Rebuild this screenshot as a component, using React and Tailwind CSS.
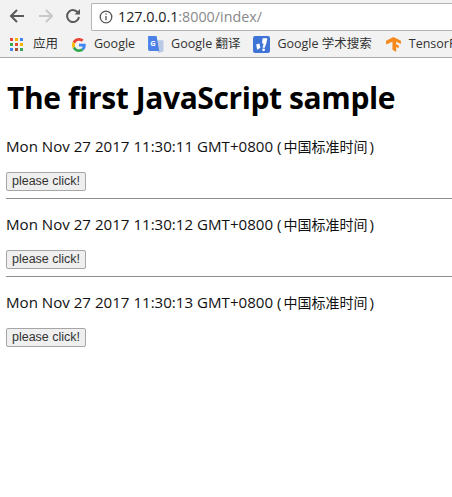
const UI = "font-['Open_Sans','Noto_Sans_CJK_SC',sans-serif]"

function Bookmark({ icon, label, className = '' }) {
  return (
    <div className={`flex items-center gap-[7px] shrink-0 ${className}`}>
      {icon}
      <span className="text-[12.5px] leading-none text-[#333] whitespace-nowrap">{label}</span>
    </div>
  )
}

function AppsIcon() {
  const colors = ['#e5493a', '#f4b400', '#4285f4', '#34a853', '#e5493a', '#f4b400', '#4285f4', '#a0522d', '#34a853']
  return (
    <div className="grid grid-cols-3 gap-[2px] w-[13px] h-[13px]">
      {colors.map((c, i) => (
        <span key={i} className="w-[3px] h-[3px]" style={{ background: c }} />
      ))}
    </div>
  )
}

function GoogleIcon() {
  return (
    <svg viewBox="0 0 48 48" className="w-[14px] h-[14px]">
      <path fill="#EA4335" d="M24 9.500c3.500 0 6.700 1.300 9.100 3.500l6.800-6.800C35.800 2.400 30.300 0 24 0 14.600 0 6.500 5.400 2.600 13.200l7.900 6.100C12.400 13.600 17.700 9.500 24 9.500z" />
      <path fill="#4285F4" d="M47 24.500c0-1.600-.1-3.100-.4-4.500H24v9h12.900c-.6 3-2.200 5.500-4.700 7.200l7.600 5.900C44.300 37.900 47 31.800 47 24.500z" />
      <path fill="#FBBC05" d="M10.500 28.700c-.5-1.400-.8-3-.8-4.700s.3-3.200.8-4.700l-7.900-6.100C.9 16.500 0 20.100 0 24s.9 7.500 2.600 10.800l7.900-6.100z" />
      <path fill="#34A853" d="M24 48c6.500 0 11.900-2.100 15.800-5.800l-7.600-5.900c-2.100 1.400-4.900 2.300-8.200 2.300-6.300 0-11.600-4.100-13.500-9.800l-7.900 6.100C6.500 42.600 14.600 48 24 48z" />
    </svg>
  )
}

function TranslateIcon() {
  return (
    <svg viewBox="0 0 16 16" className="w-[17px] h-[17px]">
      <path fill="#b9c9e6" d="M7 4h7.500a1 1 0 0 1 1 1v9.500L11 16l-1-2z" />
      <path fill="#4c82e8" d="M1 0h8l2.500 14H2.500a1.500 1.500 0 0 1-1.500-1.500z" />
      <text x="3" y="9" fontSize="7" fontWeight="700" fill="#fff" fontFamily="Open Sans, sans-serif">G</text>
    </svg>
  )
}

function ScholarIcon() {
  return (
    <svg viewBox="0 0 16 16" className="w-[17px] h-[17px]">
      <rect width="16" height="16" rx="2" fill="#3f74d6" />
      <path fill="#fff" d="M9 2h4.500l-1 5-1.500 4H9l1-4H8.500zM3 8l3-1 1 4-3 2z" />
      <circle cx="10" cy="13" r="1.300" fill="#fff" />
    </svg>
  )
}

function TensorIcon() {
  return (
    <svg viewBox="0 0 16 16" className="w-[17px] h-[17px]">
      <path fill="#f58a1f" d="M1 4.500 8 1l7 3.500v3l-4.500-2v2.200l2.500 1.300v2.500l-2.500-1.200V15L7 13V5.500l-6 2.500z" />
    </svg>
  )
}

const ROWS = ['11:30:11', '11:30:12', '11:30:13']

export default function App() {
  return (
    <div className={`w-[452px] h-[497px] overflow-hidden bg-white ${UI}`}>
      {/* Toolbar */}
      <div className="h-[32px] bg-[#f2f2f2] flex items-center pl-[9px]">
        <svg viewBox="0 0 16 16" className="w-[16px] h-[16px] shrink-0" fill="none" stroke="#5a5a5a" strokeWidth="2">
          <path d="M15 8H2M8 2 2 8l6 6" />
        </svg>
        <svg viewBox="0 0 16 16" className="w-[16px] h-[16px] shrink-0 ml-[13px]" fill="none" stroke="#c8c8c8" strokeWidth="2">
          <path d="M1 8h13M8 2l6 6-6 6" />
        </svg>
        <svg viewBox="0 0 16 16" className="w-[16px] h-[16px] shrink-0 ml-[11px]" fill="none" stroke="#5a5a5a" strokeWidth="2">
          <path d="M13.500 5.500A6 6 0 1 0 14 9" />
          <path d="M15 1v5.500H9.500" fill="#5a5a5a" stroke="none" />
        </svg>
        <div className="ml-[10px] flex-1 h-[28px] mt-[2px] bg-white border border-[#b4b4b4] border-r-0 rounded-l-[2px] flex items-center pl-[7px]">
          <svg viewBox="0 0 14 14" className="w-[14px] h-[14px] shrink-0" fill="none" stroke="#555" strokeWidth="1.300">
            <circle cx="7" cy="7" r="5.800" />
            <path d="M7 6v4.200M7 3.400v1.400" />
          </svg>
          <span className="ml-[5px] text-[14.3px] leading-none text-[#222] whitespace-nowrap">
            127.0.0.1<span className="text-[#8a8a8a]">:8000/index/</span>
          </span>
        </div>
      </div>

      {/* Bookmarks */}
      <div className="h-[26px] bg-[#f2f2f2] border-b border-[#a8a8a8] flex items-center pl-[10px] overflow-hidden">
        <Bookmark icon={<AppsIcon />} label="应用" className="gap-[10px]" />
        <Bookmark icon={<GoogleIcon />} label="Google" className="ml-[14px] gap-[8px]" />
        <Bookmark icon={<TranslateIcon />} label="Google 翻译" className="ml-[12px]" />
        <Bookmark icon={<ScholarIcon />} label="Google 学术搜索" className="ml-[13px]" />
        <Bookmark icon={<TensorIcon />} label="TensorFlow" className="ml-[13px]" />
      </div>

      {/* Page */}
      <div className="pl-[6px]">
        <h1 className="mt-[18px] mb-[16px] ml-[1px] text-[30px] leading-[44px] tracking-[-0.4px] font-bold text-black whitespace-nowrap">
          The first JavaScript sample
        </h1>
        {ROWS.map((time, i) => (
          <div key={time}>
            <p className="h-[20px] text-[15.1px] leading-[20px] text-[#111] whitespace-nowrap">
              Mon Nov 27 2017 {time} GMT+0800 (<span className="text-[14px] leading-none mx-[2px]">中国标准时间</span>)
            </p>
            <button className="mt-[16px] block w-[80px] h-[19px] bg-[#efefef] border border-[#a6a6a6] rounded-[2px] font-['Liberation_Sans',sans-serif] text-[12.5px] leading-none text-[#333]">
              please click!
            </button>
            {i < 2 && <hr className="mt-[7px] mb-[15px] border-t border-[#8e8e8e]" />}
          </div>
        ))}
      </div>
    </div>
  )
}
